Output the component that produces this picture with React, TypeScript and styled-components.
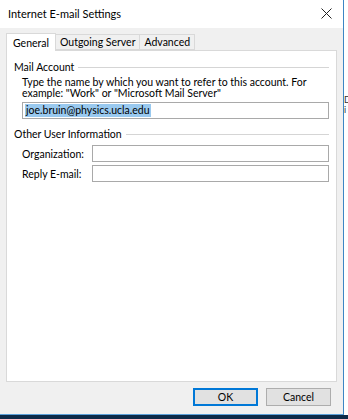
import React from "react";
import styled, { createGlobalStyle } from "styled-components";

const GlobalStyle = createGlobalStyle`
  *, *::before, *::after {
    box-sizing: border-box;
  }
  html, body {
    margin: 0;
    padding: 0;
    background: #0c2a48;
  }
  body {
    font-family: Lato, "Noto Sans", sans-serif;
    font-size: 10.5px;
    color: #000;
  }
`;

const Screen = styled.div`
  width: 348px;
  height: 419px;
  display: flex;
  flex-direction: column;
  overflow: hidden;
`;

const Desktop = styled.div`
  display: flex;
  height: 415px;
`;

const Dialog = styled.div`
  width: 344px;
  display: flex;
  flex-direction: column;
  background: #f0f0f0;
  border-right: 1px solid #3c86c4;
  border-bottom: 1px solid #5aa0d8;
`;

const SideStrip = styled.div`
  flex: 1;
  background: #fff;
  display: flex;
  flex-direction: column;
  padding-top: 95px;
  font-size: 9px;
  line-height: 10px;
  color: #333;
  overflow: hidden;
  white-space: nowrap;
`;

const TitleBar = styled.div`
  height: 28px;
  flex-shrink: 0;
  background: #fff;
  display: flex;
  align-items: center;
  justify-content: space-between;
  padding: 0 8px 2px 8px;
  font-size: 11px;
`;

const CloseIcon = styled.svg`
  width: 11px;
  height: 11px;
  margin-right: 3px;
`;

const Body = styled.div`
  flex: 1;
  display: flex;
  flex-direction: column;
  padding: 5px 6px 0 6px;
`;

const TabRow = styled.div`
  display: flex;
  align-items: flex-end;
  height: 17px;
  flex-shrink: 0;
  position: relative;
  z-index: 1;
`;

const Tab = styled.div<{ $active?: boolean }>`
  height: ${(p) => (p.$active ? "18px" : "16px")};
  padding: 0 ${(p) => (p.$active ? "6px" : "4px")};
  margin-left: ${(p) => (p.$active ? "0" : "-1px")};
  margin-bottom: ${(p) => (p.$active ? "-1px" : "0")};
  display: flex;
  align-items: center;
  background: ${(p) => (p.$active ? "#fff" : "#f0f0f0")};
  border: 1px solid #d9d9d9;
  border-bottom: ${(p) => (p.$active ? "none" : "1px solid #d9d9d9")};
`;

const Panel = styled.div`
  height: 332px;
  flex-shrink: 0;
  background: #fff;
  border: 1px solid #d9d9d9;
  padding: 8px 7px 0 7px;
  display: flex;
  flex-direction: column;
`;

const GroupHeader = styled.div<{ $gap?: number }>`
  display: flex;
  align-items: center;
  gap: 4px;
  height: 16px;
  margin-top: ${(p) => p.$gap ?? 0}px;
  &::after {
    content: "";
    flex: 1;
    height: 1px;
    background: #d5d5d5;
  }
`;

const GroupBody = styled.div`
  padding: 0 0 0 8px;
  display: flex;
  flex-direction: column;
`;

const Description = styled.div`
  line-height: 11px;
  margin-top: 2px;
  padding-right: 6px;
`;

const TextBox = styled.div`
  height: 17px;
  border: 1px solid #a9a9a9;
  background: #fff;
  display: flex;
  align-items: center;
  padding-left: 2px;
  flex: 1;
`;

const Selected = styled.span`
  background: #99c9ef;
  line-height: 13px;
  padding: 0 1px;
`;

const FieldRow = styled.div<{ $gap?: number }>`
  display: flex;
  align-items: center;
  margin-top: ${(p) => p.$gap ?? 4}px;
`;

const FieldLabel = styled.div`
  width: 70px;
`;

const Footer = styled.div`
  flex: 1;
  display: flex;
  justify-content: flex-end;
  align-items: center;
  gap: 8px;
  padding: 0 6px 2px 0;
`;

const Button = styled.div<{ $default?: boolean }>`
  width: 65px;
  height: 18px;
  display: flex;
  align-items: center;
  justify-content: center;
  background: #e1e1e1;
  border: ${(p) => (p.$default ? "2px solid #0078d7" : "1px solid #adadad")};
`;

const Taskbar = styled.div`
  height: 4px;
  background: #0c2a48;
`;

export default function App() {
  return (
    <Screen>
      <GlobalStyle />
      <Desktop>
        <Dialog>
          <TitleBar>
            <span>Internet E-mail Settings</span>
            <CloseIcon viewBox="0 0 11 11">
              <path d="M0.5 0.5 L10.5 10.5 M10.5 0.5 L0.5 10.5" stroke="#222" strokeWidth="1" />
            </CloseIcon>
          </TitleBar>
          <Body>
            <TabRow>
              <Tab $active>General</Tab>
              <Tab>Outgoing Server</Tab>
              <Tab>Advanced</Tab>
            </TabRow>
            <Panel>
              <GroupHeader>Mail Account</GroupHeader>
              <GroupBody>
                <Description>
                  Type the name by which you want to refer to this account. For
                  example: "Work" or "Microsoft Mail Server"
                </Description>
                <FieldRow $gap={3}>
                  <TextBox>
                    <Selected>joe.bruin@physics.ucla.edu</Selected>
                  </TextBox>
                </FieldRow>
              </GroupBody>
              <GroupHeader $gap={7}>Other User Information</GroupHeader>
              <GroupBody>
                <FieldRow $gap={3}>
                  <FieldLabel>Organization:</FieldLabel>
                  <TextBox />
                </FieldRow>
                <FieldRow $gap={3}>
                  <FieldLabel>Reply E-mail:</FieldLabel>
                  <TextBox />
                </FieldRow>
              </GroupBody>
            </Panel>
            <Footer>
              <Button $default>OK</Button>
              <Button>Cancel</Button>
            </Footer>
          </Body>
        </Dialog>
        <SideStrip>
          <span>D</span>
          <span>i</span>
        </SideStrip>
      </Desktop>
      <Taskbar />
    </Screen>
  );
}
